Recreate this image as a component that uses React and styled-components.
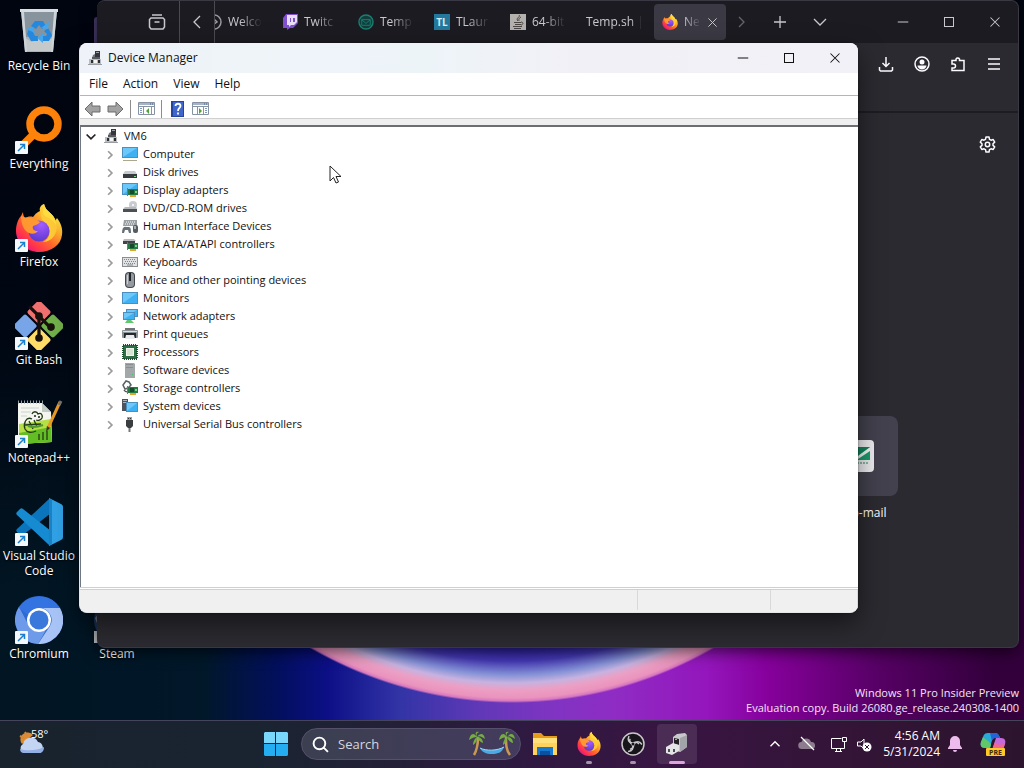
import React, { useId } from "react";
import styled, { createGlobalStyle } from "styled-components";

const GlobalStyle = createGlobalStyle`
	*, *::before, *::after {
		box-sizing: border-box;
	}
	body {
		margin: 0;
		overflow: hidden;
		font-family: "Open Sans", "Noto Sans", sans-serif;
		font-size: 12px;
		line-height: 16px;
	}
	button {
		margin: 0;
		padding: 0;
		border: 0;
		background: none;
		color: inherit;
		font: inherit;
	}
	svg {
		display: block;
		flex-shrink: 0;
	}
	ul {
		margin: 0;
		padding: 0;
		list-style: none;
	}
`;

const Screen = styled.div`
	display: flex;
	flex-direction: column;
	height: 100vh;
	background: #020a18;
`;

const Desktop = styled.main`
	position: relative;
	flex: 1;
	min-height: 0;
	overflow: hidden;
	background:
		radial-gradient(circle at 50% 301px, #2b1a90 0, #2c1f9c 345px, #4438b4 360px, #8592d6 374px, #c7b2e0 382px, #ec9fc4 389px, #ea93bd 397px, #d878c0 400px, transparent 402px),
		linear-gradient(to bottom, #000510 0, rgba(0, 5, 16, 0.9) 45%, transparent 82%),
		linear-gradient(to right, #011522 0, #01182a 20%, #020f5c 27%, #0c0f86 32%, #3234a6 39%, #6138b8 47%, #8034c2 54%, #8f2cc4 60%, #9416bc 69%, #86009c 75%, #560064 86%, #33003c 97%);
`;

const IconGrid = styled.ul`
	display: grid;
	grid-template-rows: repeat(7, 98px);
	grid-auto-flow: column;
	grid-auto-columns: 78px;
`;

const Shortcut = styled.button`
	display: flex;
	flex-direction: column;
	align-items: center;
	gap: 2px;
	width: 100%;
	padding-top: 8px;
	color: #fff;
	line-height: 15px;
	text-shadow: 0 1px 2px #000;
`;

const ShortcutArt = styled.span`
	position: relative;
	width: 48px;
	height: 48px;
`;

const ArrowBadge = styled.span`
	position: absolute;
	left: 0;
	bottom: 0;
	display: grid;
	place-items: center;
	width: 13px;
	height: 13px;
	border-radius: 1px;
	background: #f4f8fb;
`;

const Watermark = styled.p`
	position: absolute;
	right: 5px;
	bottom: 5px;
	margin: 0;
	color: #f3e4f6;
	font-size: 11px;
	line-height: 15px;
	text-align: right;
`;

/* Browser */

const Browser = styled.section`
	position: absolute;
	inset: 0 5px 72px 97px;
	display: flex;
	flex-direction: column;
	overflow: hidden;
	border: 1px solid #3a3843;
	border-left: 0;
	border-radius: 8px;
	background: #2b2a30;
	color: #fbfbfe;
	box-shadow: 0 4px 16px rgba(0, 0, 0, 0.6);
`;

const TabStrip = styled.header`
	display: flex;
	align-items: stretch;
	height: 42px;
	padding-left: 38px;
	background: #1c1b21;
	color: #c9c8ce;
`;

const StripButton = styled.button`
	display: grid;
	place-items: center;
	width: ${(p) => p.$width}px;
	border-right: 1px solid ${(p) => (p.$divided ? "#4b4a52" : "transparent")};
	color: ${(p) => (p.$dim ? "#66656d" : "inherit")};
`;

const Tabs = styled.div`
	display: flex;
	flex: 0 1 511px;
	justify-content: flex-end;
	gap: 4px;
	padding: 3px 0;
	overflow: hidden;
`;

const Tab = styled.button`
	display: flex;
	align-items: center;
	gap: 6px;
	flex: 0 0 72px;
	width: 72px;
	padding: 0 8px;
	border-radius: 4px;
	background: ${(p) => (p.$active ? "#3b3943" : "transparent")};
`;

const TabTitle = styled.span`
	flex: 1;
	min-width: 0;
	text-align: left;
	white-space: nowrap;
	mask-image: linear-gradient(to right, #000 ${(p) => p.$fade}, transparent);
`;

const CaptionButtons = styled.div`
	display: flex;
	margin-left: auto;
`;

const BrowserBar = styled.div`
	display: flex;
	justify-content: flex-end;
	align-items: flex-start;
	height: 70px;
	padding: 3px 6px 0 0;
	border-bottom: 2px solid #1d1c22;
`;

const BarButton = styled.button`
	display: grid;
	place-items: center;
	width: 36px;
	height: 36px;
`;

const NewTabPage = styled.div`
	display: flex;
	flex: 1;
	flex-direction: column;
	align-items: flex-end;
	justify-content: space-between;
	padding: 13px 13px 126px;
`;

const TopSite = styled.a`
	display: flex;
	flex-direction: column;
	align-items: center;
	gap: 9px;
	margin-right: 107px;
	color: #fbfbfe;
	text-decoration: none;
`;

const SiteTile = styled.span`
	display: grid;
	place-items: center;
	width: 80px;
	height: 80px;
	border-radius: 8px;
	background: #42414d;
`;

/* Device Manager */

const Manager = styled.section`
	position: absolute;
	inset: 43px 166px 107px 79px;
	display: flex;
	flex-direction: column;
	overflow: hidden;
	border: 1px solid #e4e6ea;
	border-width: 0 0 1px 1px;
	border-radius: 8px;
	background: #fff;
	color: #111;
	box-shadow: 0 10px 26px rgba(0, 0, 0, 0.5), 0 0 2px rgba(0, 0, 0, 0.5);
`;

const TitleBar = styled.header`
	display: flex;
	align-items: center;
	gap: 5px;
	height: 30px;
	padding-left: 7px;
	background: linear-gradient(to right, #eff3f9, #edf4f8 45%, #f2f0f7 65%, #f3f1f8);
`;

const Title = styled.h1`
	margin: 0;
	font-size: 12px;
	font-weight: 400;
`;

const CaptionButton = styled.button`
	display: grid;
	place-items: center;
	width: 46px;
`;

const MenuBar = styled.nav`
	display: flex;
	height: 23px;
	padding-left: 1px;
	border-bottom: 1px solid #b5b5b5;
`;

const MenuItem = styled.button`
	padding: 0 7px 0 8px;
`;

const ToolBar = styled.div`
	display: flex;
	align-items: center;
	height: 23px;
	padding: 3px 0 0 1px;
	border-bottom: 1px solid #d0d0d0;
`;

const ToolButton = styled.button`
	display: grid;
	place-items: center;
	width: 23px;
	height: 18px;
`;

const ToolDivider = styled.span`
	width: 1px;
	height: 18px;
	margin: 0 4px 0 3px;
	background: #8d8d8d;
`;

const TreePane = styled.div`
	flex: 1;
	min-height: 0;
	overflow: hidden;
	border-top: 6px solid #efefef;
`;

const Tree = styled.ul`
	height: 100%;
	border-top: 2px solid #6d6e72;
	border-left: 1px solid #6f7684;
	font-size: 11px;
`;

const TreeRow = styled.div`
	display: flex;
	align-items: center;
	height: 18px;
	padding-left: ${(p) => (p.$nested ? 22 : 3)}px;
`;

const Expander = styled.button`
	display: grid;
	place-items: center;
	width: 14px;
	height: 18px;
	margin-right: 5px;
	padding-top: 2px;
	color: ${(p) => (p.$open ? "#222" : "#9b9b9b")};
`;

const TreeLabel = styled.span`
	margin-left: 5px;
	white-space: nowrap;
`;

const StatusBar = styled.footer`
	display: flex;
	height: 25px;
	padding-top: 2px;
	border-top: 1px solid #cfcfcf;
	background: #f0f0f0;
	box-shadow: inset 0 1px #fff, inset 0 2px #cfcfcf;
`;

const StatusCell = styled.span`
	flex: ${(p) => p.$flex};
	margin-bottom: 2px;
	border-right: 1px solid #d9d9d9;
`;

const Pointer = styled.span`
	position: absolute;
	left: 329px;
	top: 165px;
`;

/* Taskbar */

const TaskBar = styled.footer`
	display: flex;
	align-items: center;
	height: 48px;
	background: linear-gradient(to right, #19232e 0, #1a2431 25%, #232037 38%, #2e1a40 50%, #371542 65%, #351439 80%, #2c142e);
	box-shadow: inset 0 1px #46445a;
	color: #fff;
`;

const Weather = styled.button`
	display: flex;
	align-items: flex-start;
	flex: 0 1 254px;
	height: 34px;
	padding-left: 18px;
	font-size: 11px;
	line-height: 14px;
`;

const Temperature = styled.span`
	z-index: 1;
	margin-left: -15px;
`;

const TaskButton = styled.button`
	display: flex;
	flex-direction: column;
	align-items: center;
	justify-content: flex-end;
	gap: 5px;
	width: 40px;
	height: 40px;
	margin: 0 2px;
	border-radius: 4px;
	background: ${(p) => (p.$active ? "rgba(255, 255, 255, 0.1)" : "none")};
`;

const RunMark = styled.span`
	width: ${(p) => (p.$state === "active" ? 16 : 6)}px;
	height: 3px;
	border-radius: 2px;
	background: ${(p) => ({ active: "#dca6dc", open: "#a593ab", none: "transparent" })[p.$state]};
`;

const Search = styled.label`
	display: flex;
	align-items: center;
	gap: 9px;
	width: 220px;
	height: 32px;
	margin: 0 2px 0 3px;
	padding: 0 5px 0 10px;
	border: 1px solid #55506b;
	border-radius: 16px;
	background: linear-gradient(to right, #3b3f50, #443b5e);
	color: #fff;
`;

const SearchInput = styled.input`
	flex: 1;
	min-width: 0;
	padding: 0;
	border: 0;
	outline: 0;
	background: none;
	color: #fff;
	font: 13px/18px "Open Sans", "Noto Sans", sans-serif;
	&::placeholder {
		color: #d7d5de;
		opacity: 1;
	}
`;

const Tray = styled.div`
	display: flex;
	align-items: center;
	margin-left: auto;
	padding-right: 8px;
`;

const TrayButton = styled.button`
	display: grid;
	place-items: center;
	width: ${(p) => p.$width}px;
	height: 40px;
`;

const Clock = styled.button`
	display: flex;
	flex-direction: column;
	align-items: flex-end;
	width: 66px;
	white-space: nowrap;
`;

/* Glyphs */

const Line = ({ d, size = 16, width = 1 }) => (
	<svg width={size} height={size} viewBox="0 0 16 16" fill="none" stroke="currentColor" strokeWidth={width}>
		<path d={d} />
	</svg>
);

const Minimize = () => <Line size={12} d="M1 8h14" width={1.4} />;
const Maximize = () => <Line size={12} d="M2 2h12v12H2z" width={1.4} />;
const Close = ({ size = 12 }) => <Line size={size} d="M2 2l12 12M14 2L2 14" width={1.4} />;

const FirefoxIcon = ({ size = 48 }) => {
	const id = useId();
	return (
		<svg width={size} height={size} viewBox="0 0 48 48">
			<defs>
				<linearGradient id={id + "a"} x1="0.85" y1="0.1" x2="0.15" y2="0.9">
					<stop offset="0" stopColor="#fff44f" />
					<stop offset="0.3" stopColor="#ffb32c" />
					<stop offset="0.58" stopColor="#ff672d" />
					<stop offset="0.85" stopColor="#ff2f50" />
					<stop offset="1" stopColor="#e31587" />
				</linearGradient>
				<radialGradient id={id + "b"} cx="0.6" cy="0.2" r="0.9">
					<stop offset="0" stopColor="#a35cff" />
					<stop offset="0.6" stopColor="#7543e0" />
					<stop offset="1" stopColor="#523ac0" />
				</radialGradient>
			</defs>
			<path fill={`url(#${id}a)`} d="M29 0c1 6 6 8 9 12 1 1 2 3 2 5l2-3c4 5 6 11 5 17-1 10-11 17-23 17S1 39 1 27c0-6 2-12 5-15l2-4c0 3 1 5 2 6 2-1 5-2 8-1 3-4 5-5 7-6-1-3 1-6 4-7z" />
			<path fill="#ffca38" d="M29 0c1 6 6 8 9 12 5 6 5 14 1 20-3 4-7 6-11 6 8-4 9-13 2-19-6-5-5-13-1-19z" />
			<circle cx="24" cy="27" r="10.5" fill={`url(#${id}b)`} />
			<path fill="#ff9830" d="M6 12c2 1 6 2 10 2 3 0 5 2 9 4-2 3-5 3-7 4-1 3 1 5 5 5-2 3-8 4-12 0-3-3-5-9-5-15z" />
			<path fill="#ffdc3f" d="M29 0c1 6 6 8 9 12 2 3 3 6 3 9-3-5-7-7-11-9-3-4-3-8-1-12z" />
		</svg>
	);
};

const RecycleBin = () => (
	<svg width="48" height="48" viewBox="0 0 48 48">
		<path d="M6 2h36l-4 42H10z" fill="#a9b3bb" />
		<path d="M8 4h32l-3 25H11z" fill="#87939d" />
		<path d="M10 30l7 4 8-4 7 3 6-3-2 13H11z" fill="#c6c9c9" />
		<path d="M5 1h38v3H5z" fill="#d9dfe2" />
		<path d="M6 3l4 41h2L9 4zM42 3l-4 41h-2l3-40z" fill="#cdd4d8" />
		<path d="M20 13h8l3 5-4 3-3-4-3 4-5-3zM33 20l4 7-3 6h-7v-5h4l1-2-3-3zM14 20l5 1-1 3 2 4h3v5h-7l-4-7z" fill="#2488df" />
		<path d="M26 20l7 1 1-7zM28 25v10l-6-5zM11 21l7-2 2 6z" fill="#43a7ef" />
	</svg>
);

const EverythingIcon = () => (
	<svg width="48" height="48" viewBox="0 0 48 48" fill="none" stroke="#ff830b">
		<circle cx="29" cy="18" r="14" strokeWidth="7.5" />
		<path d="M19 28L4 43" strokeWidth="8" />
	</svg>
);

const GitIcon = () => (
	<svg width="48" height="48" viewBox="0 0 48 48">
		<g transform="rotate(45 24 24)">
			<rect x="7" y="7" width="16" height="16" rx="2" fill="#f07070" />
			<rect x="25" y="7" width="16" height="16" rx="2" fill="#71b04a" />
			<rect x="7" y="25" width="16" height="16" rx="2" fill="#78a4e8" />
			<rect x="25" y="25" width="16" height="16" rx="2" fill="#ffdd68" />
		</g>
		<path d="M15 6l9 9v20M24 15l10 10" fill="none" stroke="#17100d" strokeWidth="3" />
		<circle cx="24" cy="15" r="3.5" fill="#17100d" />
		<circle cx="35" cy="25" r="3.5" fill="#17100d" />
		<circle cx="24" cy="35" r="3.5" fill="#17100d" />
	</svg>
);

const GitShortcut = () => (
	<svg width="48" height="48" viewBox="2 2 44 44">
		<GitIcon />
	</svg>
);

const NotepadIcon = () => (
	<svg width="48" height="48" viewBox="0 0 48 48">
		<path d="M3 3h24l9 9 1 30-34 2z" fill="#f4f6ef" />
		<path d="M4 24l32-5 1 23-33 2z" fill="#b5df45" />
		<path d="M4 33l32-6 1 15-33 2z" fill="#63bd25" />
		<path d="M3 2h25" stroke="#98a09c" strokeWidth="3" strokeDasharray="1 2" />
		<path d="M6 8h18M6 12h10M6 16h6" stroke="#cad2cd" />
		<path d="M27 3v9h9z" fill="#c3cbc5" />
		<path d="M17 19c-6-3-9 5-7 10 2 4 7 4 11 2M17 14c1-3 5-3 6 0 3-2 5 1 4 4-1 2-4 3-6 2M10 25l16-1M14 21l4 8M19 20l3 7M24 40v-6M28 40v-8M32 40v-9" fill="none" stroke="#243b18" strokeWidth="1.3" />
		<path d="M13 26c5 2 10 1 15-1" fill="none" stroke="#4d9a2c" strokeWidth="2" />
		<circle cx="20" cy="16" r="1" fill="#182412" />
		<circle cx="24" cy="17" r="1" fill="#182412" />
		<path d="M45 2L33 28" stroke="#e89a25" strokeWidth="3" />
		<path d="M46 1l-2 4" stroke="#777" strokeWidth="3" />
		<path d="M32 26l3 2-4 4z" fill="#463224" />
	</svg>
);

const CodeIcon = () => (
	<svg width="48" height="48" viewBox="0 0 48 48">
		<path d="M34 1L2 31c-1 1-1 2 0 3l3 3c1 1 2 1 3 0L36 15z" fill="#0a74bd" />
		<path d="M34 47L2 17c-1-1-1-2 0-3l3-3c1-1 2-1 3 0l28 22z" fill="#168bd2" />
		<path d="M34 0l12 6c1 1 2 1 2 3v30c0 2-1 2-2 3l-12 6z" fill="#31a2e7" />
		<path d="M34 0l3 2v44l-3 2z" fill="#1b82c5" />
	</svg>
);

const ChromiumIcon = () => (
	<svg width="48" height="48" viewBox="0 0 48 48">
		<circle cx="24" cy="24" r="24" fill="#2f69d2" />
		<path d="M24 12h21a24 24 0 01-22 36l12-18a12 12 0 00-11-18z" fill="#a9c5f7" />
		<path d="M4 11a24 24 0 0019 37l8-14a12 12 0 01-17-4z" fill="#6e9be9" />
		<path d="M4 12a24 24 0 0141 0H24a12 12 0 00-11 7z" fill="#3474e2" />
		<circle cx="24" cy="24" r="12" fill="#fff" />
		<circle cx="24" cy="24" r="9.5" fill="#3b78dc" />
	</svg>
);

const PurpleAppIcon = () => (
	<svg width="48" height="48" viewBox="0 0 48 48">
		<rect x="1" y="9" width="46" height="34" rx="3" fill="#4c3d70" />
	</svg>
);

const SteamIcon = () => (
	<svg width="48" height="48" viewBox="0 0 48 48">
		<circle cx="24" cy="24" r="23" fill="#1f3f6e" />
		<path d="M1 35h12v12H1z" fill="#c9cbd0" />
		<path d="M2 22l3-4v12z" fill="#8c93a3" />
	</svg>
);

const ComputerParts = () => (
	<svg width="16" height="16" viewBox="0 0 16 16">
		<path d="M8 1h5v6H8z" fill="#33363a" />
		<path d="M9 2h3v1H9z" fill="#9da3a8" />
		<path d="M6 5l2-1v4H5z" fill="#70757b" />
		<path d="M5 7h8v2H5z" fill="#565b60" />
		<path d="M2 9h12v5H2z" fill="#b9bcc0" />
		<path d="M4 10h2v3H4zM11 10h2v3h-2z" fill="#2b2e31" />
		<path d="M7 10h3v3H7z" fill="#f4f4f4" />
		<path d="M1 14h14v1H1z" fill="#9a9da1" />
	</svg>
);

const Screen16 = ({ x = 0, y = 2, w = 16, h = 10 }) => (
	<g>
		<rect x={x} y={y} width={w} height={h} fill="#4a8fbd" />
		<rect x={x + 1} y={y + 1} width={w - 2} height={h - 2} fill="#3fb0f2" />
		<path d={`M${x + 1} ${y + h - 1}L${x + w - 1} ${y + 1}H${x + 1}z`} fill="#6cc8fa" />
	</g>
);

const Card16 = () => (
	<g>
		<path d="M6 7h10v6H6z" fill="#257a43" />
		<path d="M8 8h4v4H8z" fill="#174b2e" />
		<path d="M13 9h2v2h-2z" fill="#7ccf8d" />
		<path d="M8 13h6v2H8z" fill="#e3a52c" />
		<path d="M5 6h1v8H5z" fill="#777" />
	</g>
);

const deviceArt = {
	computer: <><Screen16 y={1} h={11} /><path d="M1 14h14v1H1z" fill="#ada78e" /></>,
	disk: <><path d="M3 7h10l2 3H1z" fill="#c8cbcd" /><path d="M1 10h14v4H1z" fill="#373b3e" /><path d="M12 12h2v1h-2z" fill="#84d68c" /></>,
	display: <><Screen16 y={1} h={12} /><Card16 /></>,
	dvd: <><circle cx="11" cy="5" r="4" fill="#c9cbd1" /><circle cx="11" cy="5" r="1" fill="#fff" /><path d="M3 7h11l1 2H1z" fill="#b5b8bb" /><path d="M1 9h14v3H1z" fill="#4c5054" /></>,
	hid: <><path d="M2 2h13v6H1z" fill="#9ba0a4" /><path d="M4 4h9M3 6h10" stroke="#fff" strokeDasharray="1 1" /><path d="M0 15c0-5 2-7 4-6h3c2 0 2 4 2 6H7l-1-3H3l-1 3z" fill="#66707a" /><rect x="11" y="7" width="5" height="8" rx="2" fill="#555c63" /><path d="M13 8v3" stroke="#fff" /></>,
	ide: <><path d="M2 3h10l2 2H1z" fill="#b9bcbe" /><path d="M1 5h12v3H1z" fill="#42464a" /><Card16 /></>,
	keyboard: <><path d="M0 3h16v10H0z" fill="#8a8e92" /><path d="M1 4h14v8H1z" fill="#dfe1e3" /><path d="M2 5.5h12M3 7.5h11M2 9.5h12" stroke="#81868a" strokeDasharray="1 1" /><path d="M5 11h6" stroke="#81868a" /></>,
	mouse: <><rect x="3" y="0" width="10" height="16" rx="4" fill="#41464a" /><rect x="4" y="1" width="8" height="14" rx="3" fill="#93999e" /><path d="M7 1h2v8H7z" fill="#22262a" /><path d="M5.5 3v9" stroke="#ced1d4" /></>,
	monitor: <Screen16 y={2} h={12} />,
	network: <><Screen16 x={4} y={1} w={12} h={8} /><Screen16 x={1} y={4} w={12} h={8} /><path d="M5 12h4l3 3H3z" fill="#62c66b" /></>,
	printer: <><path d="M3 2h10v3H3z" fill="#6e7478" /><rect y="4" width="16" height="8" rx="1" fill="#8c9397" /><path d="M2 7h12v5H2z" fill="#25292c" /><path d="M4 9h8l1 4H3z" fill="#e9edef" /><path d="M1 5h14v1H1z" fill="#dce0e2" /></>,
	cpu: <><path d="M1 1h14v14H1z" fill="#2f6f45" /><path d="M1 1h14v14H1z" fill="none" stroke="#1d4e2e" strokeWidth="2" strokeDasharray="1 1" /><path d="M4 4h8v8H4z" fill="#f1f5ee" /><path d="M5 5h6v6H5z" fill="#d6e6d2" /></>,
	software: <><path d="M3 1h9l1 1v14H3z" fill="#a2a7aa" /><path d="M4 2h7v1H4zM4 5h7v1H4z" fill="#878d91" /><path d="M10 12h1v1h-1z" fill="#4bbf64" /></>,
	storage: <><path d="M1 5l3-4 3 1 2 3-3 3-3 1z" fill="none" stroke="#5b6268" strokeWidth="1.5" /><path d="M2 10c1 2 2 2 4 2" fill="none" stroke="#555" strokeWidth="1.5" /><Card16 /></>,
	system: <><path d="M0 1h6v12H0z" fill="#4c535a" /><path d="M1 2h4v1H1zM1 4h4v1H1z" fill="#adb2b7" /><Screen16 x={4} y={4} w={12} h={10} /></>,
	usb: <><path d="M5 1h5v4H5z" fill="#9a9da1" /><path d="M4 4h7v6l-2 2H6l-2-2z" fill="#3b3e41" /><path d="M6 2h1v1H6zM8 2h1v1H8z" fill="#333" /><path d="M7.5 12v4" stroke="#777" strokeWidth="2" /></>,
};

const DeviceIcon = ({ kind }) => (
	<svg width="16" height="16" viewBox="0 0 16 16">{deviceArt[kind]}</svg>
);

const NavArrow = ({ back }) => (
	<svg width="17" height="16" viewBox="0 0 17 16">
		<path d={back ? "M1 8l7-7v4h8v6H8v4z" : "M16 8L9 1v4H1v6h8v4z"} fill="#a2a2a2" stroke="#6c6c6c" />
	</svg>
);

const PanelIcon = ({ right }) => (
	<svg width="17" height="15" viewBox="0 0 17 15">
		<path d="M.5 1.5h16v12H.5z" fill="#fff" stroke="#8792a2" />
		<path d="M1 2h15v2H1z" fill="#a7b4c8" />
		<path d="M12 3h1M14 3h1" stroke="#41618e" />
		<path d="M1 5.5h15" stroke="#8792a2" />
		<path d={right ? "M11.5 5v8M13 7.5h2M13 9.5h2M13 11.5h2M5.500 5v8" : "M5.5 5v8M2 7.5h2M2 9.5h2M2 11.5h2M13.500 5v8"} stroke="#7e97c2" />
		<path d={right ? "M7 7l3 3-3 3z" : "M11 7l-3 3 3 3z"} fill="#50a23b" />
	</svg>
);

const HelpIcon = () => (
	<svg width="13" height="16" viewBox="0 0 13 16">
		<path d="M0 0h13v16H0z" fill="#23469c" />
		<path d="M2 1h10v14H2z" fill="#3f67cb" />
		<path d="M4.5 5c0-3 5-3 5 0 0 2-2.500 2-2.500 5M7 11.500v2" fill="none" stroke="#fff" strokeWidth="1.8" />
	</svg>
);

const TwitchIcon = () => (
	<svg width="16" height="16" viewBox="0 0 16 16">
		<path d="M4 0h12v9l-5 5H8l-3 2v-2H1V4z" fill="#8150cf" />
		<path d="M5 1h10v7l-3 3H9l-2 2v-2H5z" fill="#e8def6" />
		<path d="M8 4h1v4H8zM11 4h2v4h-2z" fill="#8150cf" />
	</svg>
);

const RingIcon = () => (
	<svg width="16" height="16" viewBox="0 0 16 16" fill="none" stroke="#9b9aa0" strokeWidth="1.5">
		<circle cx="8" cy="8" r="7" />
		<path d="M8 5l3 3-3 2" />
	</svg>
);

const TempIcon = () => (
	<svg width="16" height="16" viewBox="0 0 17 17" fill="none" stroke="#168072">
		<circle cx="8.5" cy="8.5" r="7.5" fill="#123d3b" strokeWidth="1.5" />
		<path d="M4 6h9v6H4zM4 6l4.500 4L13 6" />
	</svg>
);

const TileGlyph = styled.span`
	display: grid;
	place-items: center;
	flex: 0 0 16px;
	height: 16px;
	background: #24789b;
	color: #d7edf5;
	font-size: 10px;
	font-weight: 700;
`;

const JavaIcon = () => (
	<svg width="16" height="16" viewBox="0 0 16 16">
		<path d="M0 0h16v16H0z" fill="#b3b0ae" />
		<path d="M9 1c2 2-4 3-1 6M11 3c-3 2-2 2-2 4M4 8.500h7M5 10.500h6M3 12.500h9M4 14.500h7M11 8c3 0 2 3 0 3" fill="none" stroke="#4b4544" />
	</svg>
);

const MailLogo = () => (
	<svg width="32" height="32" viewBox="0 0 32 32">
		<rect width="32" height="32" rx="4" fill="#ededf0" />
		<path d="M4 7h24v13H4z" fill="#1b9b6e" />
		<path d="M4 7l12 9L28 7v4L16 19 4 10z" fill="#f4f6f6" />
		<path d="M4 7h24L16 15z" fill="#11845d" />
		<path d="M6 23h21" stroke="#89b7a5" strokeWidth="2" strokeDasharray="2 1" />
	</svg>
);

const WeatherIcon = () => (
	<svg width="28" height="28" viewBox="0 0 28 28">
		<path d="M4 17a7 7 0 0111-9z" fill="#e08a30" />
		<path d="M2 9l4 2M7 5l2 4" stroke="#d08a3c" strokeWidth="2" />
		<path d="M6 26a5 5 0 01-1-9 8 8 0 0115-2 6 6 0 012 11z" fill="#c4d5f3" />
		<path d="M6 26c-3 0-4-2-4-4 6 2 17 2 24-2 0 4-2 6-5 6z" fill="#94afe4" />
	</svg>
);

const StartIcon = () => (
	<svg width="24" height="24" viewBox="0 0 24 24">
		<path d="M1 0h10v11H0V1zM12 0h11l1 1v10H12z" fill="#78d7fb" />
		<path d="M0 12h11v12H1l-1-1zM12 12h12v11l-1 1H12z" fill="#25adf1" />
	</svg>
);

const PalmIcon = () => (
	<svg width="46" height="26" viewBox="0 0 46 26">
		<path d="M11 17c6 3 16 3 24-1-2 5-5 7-12 7-6 0-10-2-12-6z" fill="#4ba9e3" />
		<path d="M11 17c6 3 17 3 24-1" fill="none" stroke="#9adaf5" />
		{[0, 30].map((x) => (
			<g key={x} transform={`translate(${x} 0)`}>
				<path d={x ? "M7 6c0 7 0 13 4 18" : "M9 6c0 7-1 13-4 18"} fill="none" stroke="#cb9852" strokeWidth="2.5" />
				<path d="M8 6C4 0 1 4 0 9c3-2 5-3 8-3-3 2-4 5-4 8 3-2 4-4 4-8 1 3 3 5 6 6 0-4-3-6-6-6 3-2 5 0 8 2-1-5-4-7-8-2C7 3 8 2 10 1 6 0 6 3 8 6z" fill="#75ad42" />
			</g>
		))}
	</svg>
);

const FolderIcon = () => (
	<svg width="26" height="24" viewBox="0 0 26 24">
		<path d="M1 1h8l3 3h13v19H1z" fill="#e79b19" />
		<path d="M1 6h24v17H1z" fill="#ffd25b" />
		<path d="M1 6h24v5H1z" fill="#ffe07b" />
		<path d="M5 15h16v8H5z" fill="#1678ce" />
		<path d="M8 19h10v4H8z" fill="#0b509f" />
	</svg>
);

const ObsIcon = () => (
	<svg width="24" height="24" viewBox="0 0 24 24">
		<circle cx="12" cy="12" r="11" fill="#17151a" stroke="#c9c7ca" strokeWidth="1.5" />
		<g fill="none" stroke="#c9c7ca" strokeWidth="1.5">
			{[0, 120, 240].map((a) => (
				<path key={a} d="M8 4c-2 4 0 7 4 7 2-1 4-1 6 1" transform={`rotate(${a} 12 12)`} />
			))}
		</g>
		<circle cx="12" cy="12" r="1.5" fill="#17151a" />
	</svg>
);

const HardwareIcon = () => (
	<svg width="24" height="24" viewBox="0 0 24 24">
		<path d="M8 5l4-3 8-1 2 2v12l-7 5-7-3z" fill="#c8c9cc" />
		<path d="M15 6l7-3v12l-7 5z" fill="#a3a4a9" />
		<path d="M9 6l5 1v6l-5-1z" fill="#222" />
		<path d="M1 15l7-4 6 2v6l-7 4-6-2z" fill="#e4e4e7" />
		<path d="M3 17h2v3H3zM8 17h2v3H8z" fill="#4d4e53" />
		<path d="M10 7h2v1h-2z" fill="#7bcf70" />
	</svg>
);

const CopilotIcon = () => (
	<svg width="26" height="26" viewBox="0 0 26 26">
		<path d="M8 2h7c3 0 4 2 5 5h-5c-3 0-3 3-4 6l-1 4H5c-4 0-5-3-4-6l2-5c1-3 2-4 5-4z" fill="#28a9d7" />
		<path d="M15 2c3 0 4 2 5 5h-5c-2 0-3 2-3 3l-2-8z" fill="#2464d8" />
		<path d="M1 11l2-5c4 4 7 4 8 8l-1 3H5c-4 0-5-3-4-6z" fill="#60c76a" />
		<path d="M16 7h5c4 0 5 3 4 6l-2 6H12l3-9z" fill="#c66adb" />
		<path d="M15 11c4 4 8 3 10 1l-2 7H12z" fill="#f06791" />
		<rect x="6" y="17" width="19" height="8" rx="1" fill="#ffc928" />
		<text x="15.5" y="24" fontSize="7" fontWeight="700" textAnchor="middle" fill="#3d2a0a">PRE</text>
	</svg>
);

const shortcuts = [
	{ name: "Recycle Bin", art: <RecycleBin />, plain: true },
	{ name: "Everything", art: <EverythingIcon /> },
	{ name: "Firefox", art: <FirefoxIcon /> },
	{ name: "Git Bash", art: <GitShortcut /> },
	{ name: "Notepad++", art: <NotepadIcon /> },
	{ name: "Visual Studio Code", art: <CodeIcon /> },
	{ name: "Chromium", art: <ChromiumIcon /> },
	{ name: "", art: <PurpleAppIcon />, plain: true, row: 1 },
	{ name: "Steam", art: <SteamIcon />, plain: true, row: 7 },
];

const devices = [
	["computer", "Computer"],
	["disk", "Disk drives"],
	["display", "Display adapters"],
	["dvd", "DVD/CD-ROM drives"],
	["hid", "Human Interface Devices"],
	["ide", "IDE ATA/ATAPI controllers"],
	["keyboard", "Keyboards"],
	["mouse", "Mice and other pointing devices"],
	["monitor", "Monitors"],
	["network", "Network adapters"],
	["printer", "Print queues"],
	["cpu", "Processors"],
	["software", "Software devices"],
	["storage", "Storage controllers"],
	["system", "System devices"],
	["usb", "Universal Serial Bus controllers"],
];

const tabs = [
	{ title: "Welco", icon: <RingIcon /> },
	{ title: "Twitc", icon: <TwitchIcon /> },
	{ title: "Temp", icon: <TempIcon /> },
	{ title: "TLaur", icon: <TileGlyph>TL</TileGlyph> },
	{ title: "64-bit", icon: <JavaIcon /> },
	{ title: "Temp.sh |" },
];

const GridCell = styled.li`
	grid-column: ${(p) => (p.$row ? 2 : 1)};
	grid-row: ${(p) => p.$row || "auto"};
`;

function DesktopIcons() {
	return (
		<IconGrid>
			{shortcuts.map((s) => (
				<GridCell key={s.name} $row={s.row}>
					<Shortcut aria-label={s.name || "Shortcut"}>
						<ShortcutArt>
							{s.art}
							{!s.plain && (
								<ArrowBadge>
									<svg width="9" height="9" viewBox="0 0 9 9" fill="none" stroke="#1b7fd0" strokeWidth="1.5">
										<path d="M1 8l6-6M3 1.500h4.500V6" />
									</svg>
								</ArrowBadge>
							)}
						</ShortcutArt>
						<span>{s.name}</span>
					</Shortcut>
				</GridCell>
			))}
		</IconGrid>
	);
}

function WindowControls() {
	return (
		<CaptionButtons>
			<CaptionButton aria-label="Minimize"><Minimize /></CaptionButton>
			<CaptionButton aria-label="Maximize"><Maximize /></CaptionButton>
			<CaptionButton aria-label="Close"><Close /></CaptionButton>
		</CaptionButtons>
	);
}

function BrowserWindow() {
	return (
		<Browser>
			<TabStrip>
				<StripButton $width={45} $divided aria-label="Firefox View">
					<svg width="18" height="18" viewBox="0 0 18 18" fill="none" stroke="currentColor" strokeWidth="1.5">
						<path d="M4 2h10M3 5h12l1.500 1.500V14L15 16H3l-1.500-2V6.500zM6.500 9h5" />
					</svg>
				</StripButton>
				<StripButton $width={35} $divided aria-label="Scroll tabs left">
					<Line d="M11 2L5 8l6 6" width={1.3} />
				</StripButton>
				<Tabs>
					{tabs.map((t) => (
						<Tab key={t.title}>
							{t.icon}
							<TabTitle $fade={t.icon ? "35%" : "80%"}>{t.title}</TabTitle>
						</Tab>
					))}
					<Tab $active>
						<FirefoxIcon size={16} />
						<TabTitle $fade="0%">Ne</TabTitle>
						<Close size={11} />
					</Tab>
				</Tabs>
				<StripButton $width={33} $dim aria-label="Scroll tabs right">
					<Line d="M5 3l5 5-5 5" width={1.3} />
				</StripButton>
				<StripButton $width={42} aria-label="New tab">
					<Line d="M8 2v12M2 8h12" width={1.3} />
				</StripButton>
				<StripButton $width={38} aria-label="List all tabs">
					<Line d="M2 5l6 6 6-6" width={1.3} />
				</StripButton>
				<WindowControls />
			</TabStrip>
			<BrowserBar>
				<BarButton aria-label="Downloads">
					<Line d="M8 1v9M4.500 7L8 10.500 11.500 7M1.500 11v3l1 1h11l1-1v-3" width={1.5} />
				</BarButton>
				<BarButton aria-label="Account">
					<svg width="16" height="16" viewBox="0 0 16 16" fill="currentColor">
						<circle cx="8" cy="8" r="7" fill="none" stroke="currentColor" strokeWidth="1.5" />
						<circle cx="8" cy="6" r="2.5" />
						<path d="M3.500 9.500h9c0 2-2 4-4.500 4s-4.500-2-4.500-4z" />
					</svg>
				</BarButton>
				<BarButton aria-label="Extensions">
					<Line d="M2 7V4.500h4V3a2 2 0 013.500 0v1.500H14v10H2V12h1.500a1.500 1.500 0 000-4H2z" width={1.5} />
				</BarButton>
				<BarButton aria-label="Menu">
					<Line d="M2 3h12M2 8h12M2 13h12" width={1.5} />
				</BarButton>
			</BrowserBar>
			<NewTabPage>
				<BarButton aria-label="Personalize">
					<svg width="17" height="17" viewBox="0 0 17 17" fill="none" stroke="currentColor" strokeWidth="1.5" strokeLinejoin="round">
						<path d="M7 1h3l.500 2.300 1.500.9 2.200-.7 1.500 2.600L14 7.700v1.700l1.700 1.500-1.500 2.600-2.200-.7-1.500.9L10 16H7l-.500-2.300-1.500-.9-2.200.7-1.500-2.600L3 9.400V7.700L1.300 6.100l1.500-2.600 2.200.7 1.500-.9z" />
						<circle cx="8.5" cy="8.5" r="2.2" />
					</svg>
				</BarButton>
				<TopSite href="#temp-mail">
					<SiteTile><MailLogo /></SiteTile>
					temp-mail
				</TopSite>
			</NewTabPage>
		</Browser>
	);
}

function DeviceManager() {
	return (
		<Manager>
			<TitleBar>
				<ComputerParts />
				<Title>Device Manager</Title>
				<WindowControls />
			</TitleBar>
			<MenuBar>
				{["File", "Action", "View", "Help"].map((m) => (
					<MenuItem key={m}>{m}</MenuItem>
				))}
			</MenuBar>
			<ToolBar>
				<ToolButton aria-label="Back"><NavArrow back /></ToolButton>
				<ToolButton aria-label="Forward"><NavArrow /></ToolButton>
				<ToolDivider />
				<ToolButton aria-label="Console tree"><PanelIcon /></ToolButton>
				<ToolDivider />
				<ToolButton aria-label="Help"><HelpIcon /></ToolButton>
				<ToolButton aria-label="Action pane"><PanelIcon right /></ToolButton>
			</ToolBar>
			<TreePane>
				<Tree>
					<li>
						<TreeRow>
							<Expander $open aria-label="Collapse VM6">
								<Line size={10} d="M1 4l7 7 7-7" width={2.8} />
							</Expander>
							<ComputerParts />
							<TreeLabel>VM6</TreeLabel>
						</TreeRow>
						<ul>
							{devices.map(([kind, label]) => (
								<li key={kind}>
									<TreeRow $nested>
										<Expander aria-label={"Expand " + label}>
											<Line size={10} d="M5 2l6 6-6 6" width={2.8} />
										</Expander>
										<DeviceIcon kind={kind} />
										<TreeLabel>{label}</TreeLabel>
									</TreeRow>
								</li>
							))}
						</ul>
					</li>
				</Tree>
			</TreePane>
			<StatusBar>
				<StatusCell $flex="1" />
				<StatusCell $flex="0 0 133px" />
				<StatusCell $flex="0 0 87px" />
			</StatusBar>
		</Manager>
	);
}

function TaskBarArea() {
	return (
		<TaskBar>
			<Weather aria-label="Weather 58 degrees">
				<WeatherIcon />
				<Temperature>58°</Temperature>
			</Weather>
			<TaskButton aria-label="Start"><StartIcon /><RunMark $state="none" /></TaskButton>
			<Search>
				<Line size={17} d="M7 1.500a5.500 5.500 0 100 11 5.500 5.500 0 000-11M11 11l4 4" width={1.8} />
				<SearchInput placeholder="Search" aria-label="Search" />
				<PalmIcon />
			</Search>
			<TaskButton aria-label="File Explorer"><FolderIcon /><RunMark $state="none" /></TaskButton>
			<TaskButton aria-label="Firefox"><FirefoxIcon size={24} /><RunMark $state="open" /></TaskButton>
			<TaskButton aria-label="OBS Studio"><ObsIcon /><RunMark $state="open" /></TaskButton>
			<TaskButton $active aria-label="Device Manager"><HardwareIcon /><RunMark $state="active" /></TaskButton>
			<Tray>
				<TrayButton $width={32} aria-label="Hidden icons">
					<Line size={12} d="M2 11l6-6 6 6" width={1.8} />
				</TrayButton>
				<TrayButton $width={32} aria-label="OneDrive">
					<svg width="18" height="16" viewBox="0 0 18 16">
						<path d="M4 13a3.500 3.500 0 01-.5-7A5 5 0 0113 6a3.500 3.500 0 011 7z" fill="#8c7c8d" />
						<path d="M3 1l13 13" stroke="#fff" strokeWidth="1.3" />
					</svg>
				</TrayButton>
				<TrayButton $width={31} aria-label="Network">
					<svg width="17" height="17" viewBox="0 0 17 17" fill="none" stroke="#fff">
						<path d="M11.500 2.500h-10v10h13v-4M5 15.500h7M6.500 13v2M10.500 13v2M12.500 1.500h4v4h-4zM14.500 6v6" />
					</svg>
				</TrayButton>
				<TrayButton $width={20} aria-label="Volume">
					<svg width="16" height="16" viewBox="0 0 16 16">
						<path d="M8 3L5 6H1.500v4H5l3 3z" fill="none" stroke="#fff" />
						<circle cx="11" cy="11" r="4.5" fill="#fff" />
						<path d="M9 9l4 4M13 9l-4 4" stroke="#3a143d" />
					</svg>
				</TrayButton>
				<Clock>
					<span>4:56 AM</span>
					<span>5/31/2024</span>
				</Clock>
				<TrayButton $width={30} aria-label="Notifications">
					<svg width="14" height="16" viewBox="0 0 14 16" fill="#eebcec">
						<path d="M7 0a5 5 0 00-5 5v4l-2 3v1h14v-1l-2-3V5a5 5 0 00-5-5zM5 14h4a2 2 0 01-4 0z" />
					</svg>
				</TrayButton>
				<TrayButton $width={46} aria-label="Copilot"><CopilotIcon /></TrayButton>
			</Tray>
		</TaskBar>
	);
}

export default function App() {
	return (
		<Screen>
			<GlobalStyle />
			<Desktop>
				<DesktopIcons />
				<Watermark>
					Windows 11 Pro Insider Preview
					<br />
					Evaluation copy. Build 26080.ge_release.240308-1400
				</Watermark>
				<BrowserWindow />
				<DeviceManager />
				<Pointer>
					<svg width="13" height="20" viewBox="0 0 13 20">
						<path d="M1 1v15l3.500-3.500L7 18l2.500-1-2.500-5.500h5z" fill="#fff" stroke="#222" />
					</svg>
				</Pointer>
			</Desktop>
			<TaskBarArea />
		</Screen>
	);
}
